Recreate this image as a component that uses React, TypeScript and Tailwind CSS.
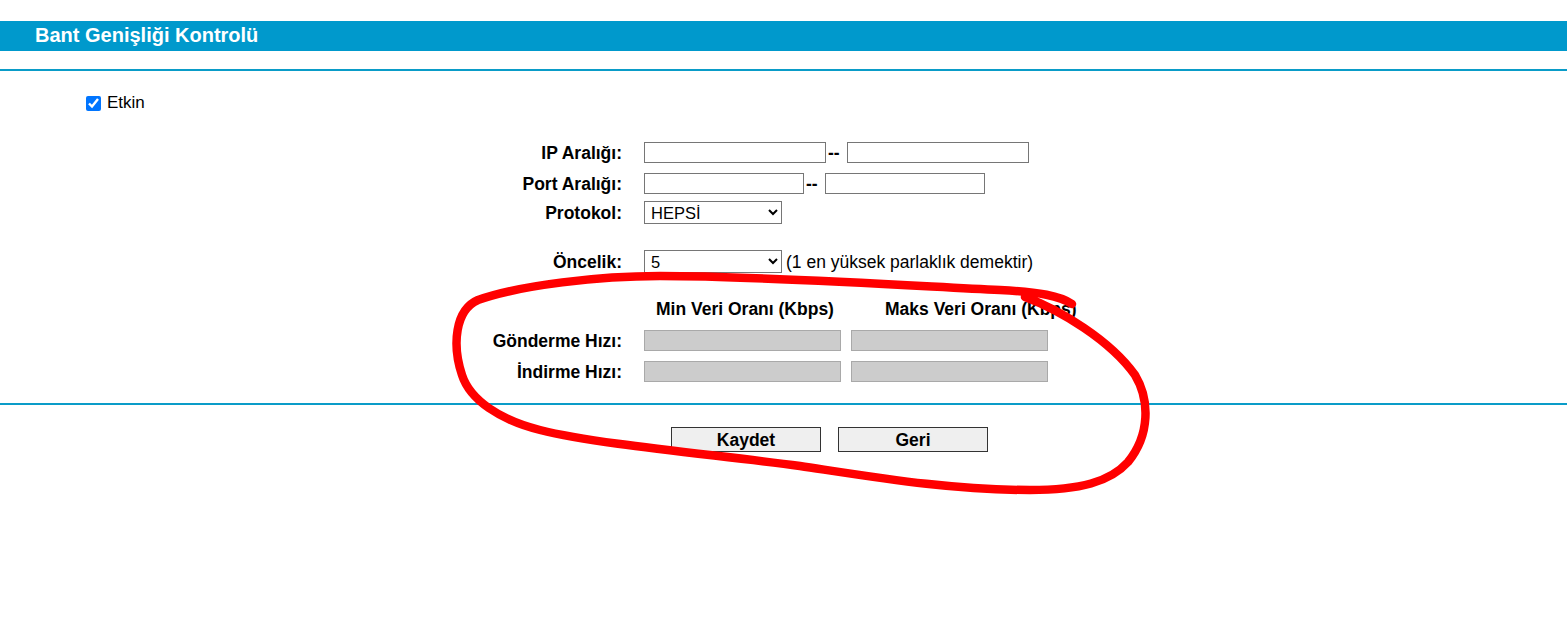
import React from "react";

const font = { fontFamily: '"Liberation Sans", Arial, sans-serif' };

function Label({ children }: { children: React.ReactNode }) {
  return <div className="w-[622px] shrink-0 text-right font-bold text-[17.5px] leading-[20px] text-black whitespace-nowrap">{children}</div>;
}

export default function App() {
  return (
    <div className="relative w-[1567px] h-[632px] bg-white overflow-hidden text-black" style={font}>
      <div className="h-[21px]" />
      <div className="h-[30px] bg-[#0099cc] flex items-center pl-[35px] pb-[2px]">
        <span className="text-white font-bold text-[20px] leading-[22px]">Bant Genişliği Kontrolü</span>
      </div>
      <div className="h-[18px]" />
      <div className="h-[2px] bg-[#0a9cc8]" />

      <div className="mt-[22px] h-[20px] flex items-center pl-[86px]">
        <input type="checkbox" defaultChecked className="m-0 w-[15px] h-[15px] accent-[#0075ff]" />
        <span className="ml-[6px] text-[17px] leading-[20px]">Etkin</span>
      </div>

      <div className="mt-[29px] flex items-center h-[21px]">
        <Label>IP Aralığı:</Label>
        <input type="text" className="ml-[22px] w-[182px] h-[21px] border border-[#767676] bg-white" />
        <span className="w-[21px] pl-[2px] text-left font-bold text-[17.5px] leading-[20px]">--</span>
        <input type="text" className="w-[182px] h-[21px] border border-[#767676] bg-white" />
      </div>

      <div className="mt-[10px] flex items-center h-[21px]">
        <Label>Port Aralığı:</Label>
        <input type="text" className="ml-[22px] w-[160px] h-[21px] border border-[#767676] bg-white" />
        <span className="w-[21px] pl-[2px] text-left font-bold text-[17.5px] leading-[20px]">--</span>
        <input type="text" className="w-[160px] h-[21px] border border-[#767676] bg-white" />
      </div>

      <div className="mt-[7px] flex items-center h-[23px]">
        <Label>Protokol:</Label>
        <select defaultValue="HEPSİ" className="ml-[22px] w-[138px] h-[23px] border border-[#767676] bg-white text-[16.5px] pl-[2px]" style={font}>
          <option>HEPSİ</option>
          <option>TCP</option>
          <option>UDP</option>
        </select>
      </div>

      <div className="mt-[26px] flex items-center h-[23px]">
        <Label>Öncelik:</Label>
        <select defaultValue="5" className="ml-[22px] w-[138px] h-[23px] border border-[#767676] bg-white text-[16.5px] pl-[2px]" style={font}>
          {[1, 2, 3, 4, 5, 6, 7, 8].map((n) => (
            <option key={n}>{n}</option>
          ))}
        </select>
        <span className="ml-[4px] text-[17.5px] leading-[20px] whitespace-nowrap">(1 en yüksek parlaklık demektir)</span>
      </div>

      <div className="mt-[26px] flex items-center h-[20px]">
        <div className="w-[622px] shrink-0" />
        <div className="ml-[34px] w-[229px] shrink-0 font-bold text-[17.5px] leading-[20px] whitespace-nowrap">Min Veri Oranı (Kbps)</div>
        <div className="font-bold text-[17.5px] leading-[20px] whitespace-nowrap">Maks Veri Oranı (Kbps)</div>
      </div>

      <div className="mt-[11px] flex items-center h-[21px]">
        <Label>Gönderme Hızı:</Label>
        <input type="text" disabled className="ml-[22px] w-[197px] h-[21px] border border-[#a9a9a9] bg-[#cccccc]" />
        <input type="text" disabled className="ml-[10px] w-[197px] h-[21px] border border-[#a9a9a9] bg-[#cccccc]" />
      </div>

      <div className="mt-[10px] flex items-center h-[21px]">
        <Label>İndirme Hızı:</Label>
        <input type="text" disabled className="ml-[22px] w-[197px] h-[21px] border border-[#a9a9a9] bg-[#cccccc]" />
        <input type="text" disabled className="ml-[10px] w-[197px] h-[21px] border border-[#a9a9a9] bg-[#cccccc]" />
      </div>

      <div className="mt-[21px] h-[2px] bg-[#0a9cc8]" />

      <div className="mt-[22px] flex pl-[671px] gap-[17px]">
        <button className="w-[150px] h-[25px] border border-[#333] bg-[#efefef] font-bold text-[17.5px] leading-[20px]" style={font}>Kaydet</button>
        <button className="w-[150px] h-[25px] border border-[#333] bg-[#efefef] font-bold text-[17.5px] leading-[20px]" style={font}>Geri</button>
      </div>

      <svg className="absolute left-0 top-0 pointer-events-none" width="1567" height="632" viewBox="0 0 1567 632">
        <path
          d="M 1025 297 C 1060 310, 1110 340, 1135 375 C 1150 400, 1150 435, 1128 462 C 1110 482, 1080 490, 1030 490 C 950 490, 880 478, 800 466 C 720 455, 600 445, 540 430 C 500 420, 470 400, 462 375 C 452 345, 455 310, 478 300 C 520 285, 600 276, 660 276 C 760 276, 900 285, 1000 290 C 1040 292, 1060 296, 1072 304"
          fill="none"
          stroke="#ff0000"
          strokeWidth="8.5"
          strokeLinecap="round"
          strokeLinejoin="round"
        />
      </svg>
    </div>
  );
}
